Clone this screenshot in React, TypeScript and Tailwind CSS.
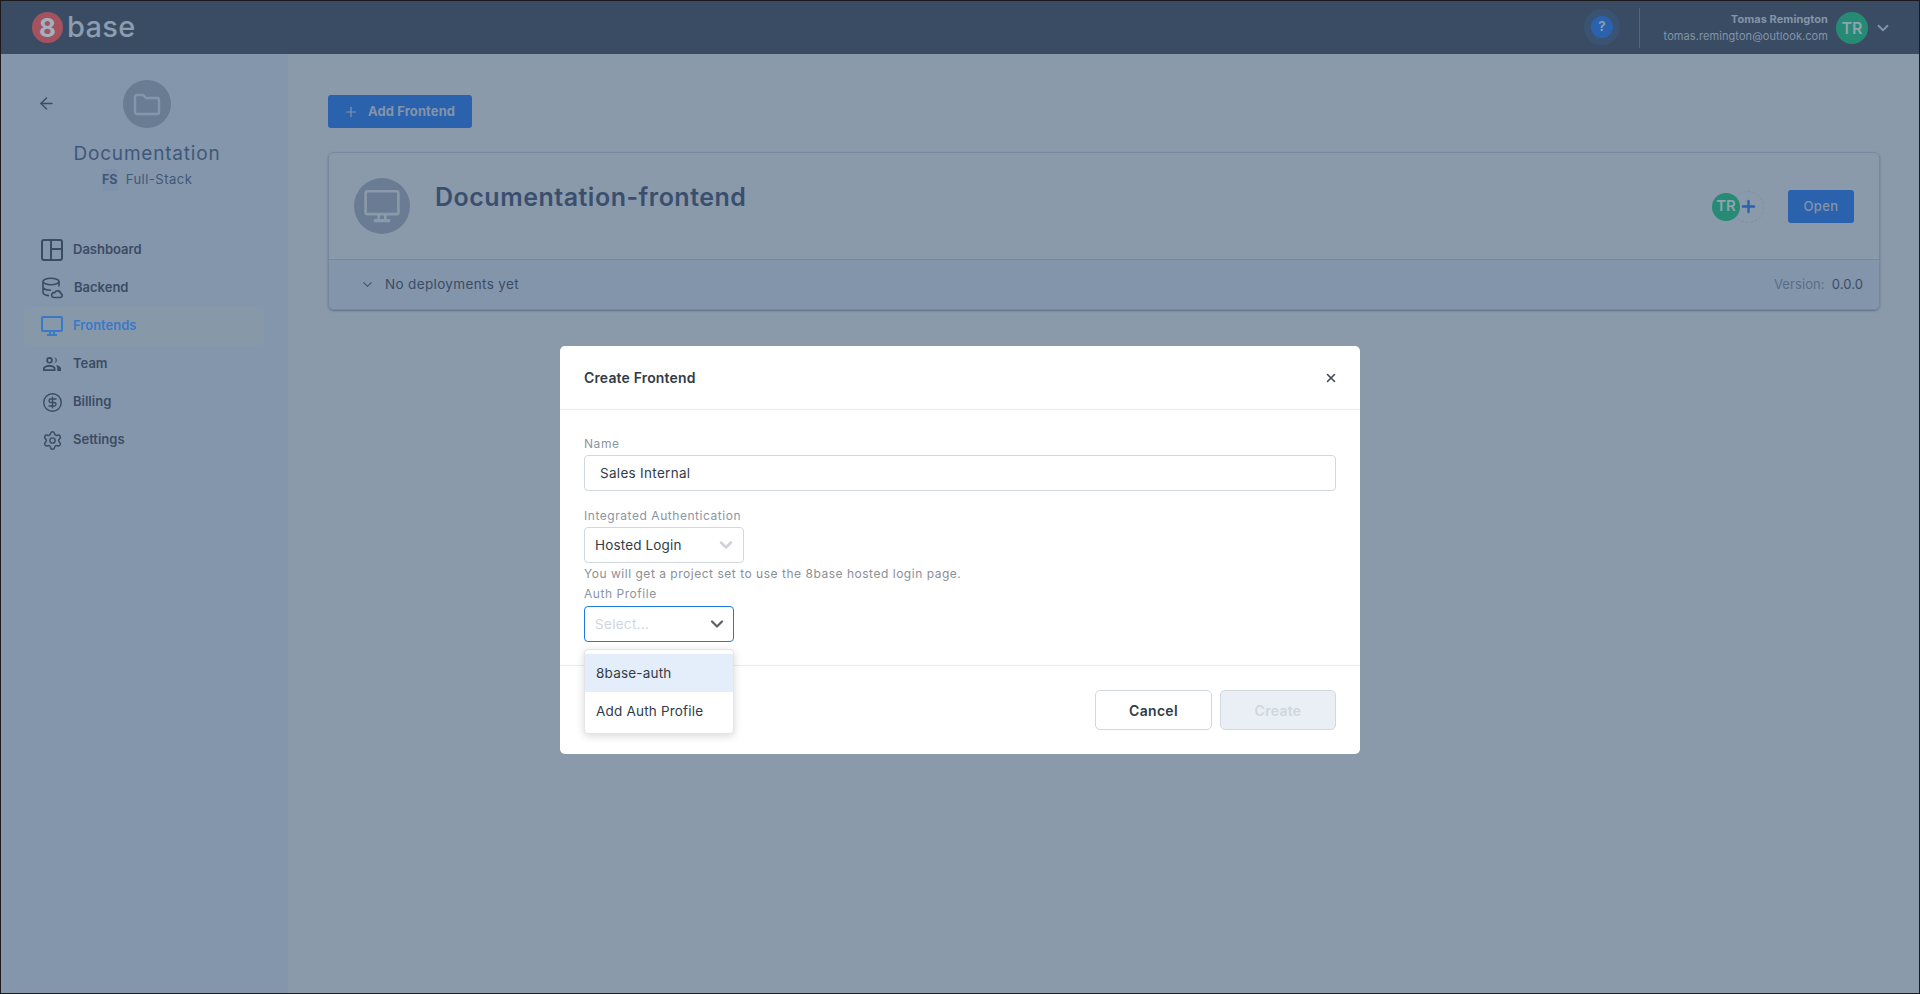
import { ChevronDown, Plus, X, ArrowLeft, CircleDollarSign, Settings } from "lucide-react";

const font = { fontFamily: "Inter, 'Noto Sans', sans-serif" };

const DashboardIcon = () => (
  <svg width="22" height="22" viewBox="0 0 22 22" fill="none" stroke="currentColor" strokeWidth="2">
    <rect x="1" y="1" width="20" height="20" rx="2" />
    <path d="M10 1v20M10 10h11" />
  </svg>
);

const BackendIcon = () => (
  <svg width="22" height="22" viewBox="0 0 22 22" fill="none" stroke="currentColor" strokeWidth="1.6">
    <ellipse cx="10" cy="4.5" rx="8" ry="3.2" />
    <path d="M2 4.5v11c0 1.6 2.6 2.8 6 3.1M18 4.5v5M2 10c0 1.8 3.4 3.2 8 3.2" />
    <path d="M12.5 20.5h7a2 2 0 0 0 .3-3.9 3.2 3.2 0 0 0-6.1-.8 2.4 2.4 0 0 0-1.2 4.7z" />
  </svg>
);

const MonitorIcon = ({ size = 22, stroke = 2 }: { size?: number; stroke?: number }) => (
  <svg width={size} height={size} viewBox="0 0 22 22" fill="none" stroke="currentColor" strokeWidth={stroke}>
    <rect x="1" y="2" width="20" height="14" rx="1" />
    <path d="M9 16v3M13 16v3" />
    <path d="M6 20h10" strokeWidth="2" />
  </svg>
);

const TeamIcon = () => (
  <svg width="20" height="20" viewBox="0 0 20 20" fill="currentColor">
    <path fillRule="evenodd" d="M7.5 3a3.3 3.3 0 1 1 0 6.6 3.3 3.3 0 0 1 0-6.6zm0 1.7a1.6 1.6 0 1 0 0 3.2 1.6 1.6 0 0 0 0-3.2z" />
    <path d="M12.5 3.2a3.2 3.2 0 0 1 0 6.2c.8-.8 1.2-1.9 1.2-3.1s-.4-2.3-1.2-3.1z" />
    <path fillRule="evenodd" d="M7.5 11c3 0 6 1.3 6 3.4V17H1v-2.6C1 12.3 4.5 11 7.5 11zm0 1.7c-2.3 0-4.8.9-4.8 1.8v.8h9v-.8c0-.9-1.9-1.8-4.2-1.8z" />
    <path d="M14 11.3c2.5.3 5 1.3 5 3.1V17h-3.8v-2.6c0-1.3-.5-2.3-1.2-3.1z" />
  </svg>
);

const FolderIcon = () => (
  <svg width="28" height="24" viewBox="0 0 28 24" fill="none" stroke="currentColor" strokeWidth="2.4">
    <path d="M2 5a2 2 0 0 1 2-2h6l3 3h11a2 2 0 0 1 2 2v12a2 2 0 0 1-2 2H4a2 2 0 0 1-2-2z" />
  </svg>
);

const navItems = [
  { label: "Dashboard", icon: <DashboardIcon /> },
  { label: "Backend", icon: <BackendIcon />, shift: true },
  { label: "Frontends", icon: <MonitorIcon />, active: true },
  { label: "Team", icon: <TeamIcon /> },
  { label: "Billing", icon: <CircleDollarSign size={21} strokeWidth={1.6} /> },
  { label: "Settings", icon: <Settings size={21} strokeWidth={1.7} /> },
];

function TopBar() {
  return (
    <header className="h-[53px] shrink-0 bg-[#3a4c64] flex items-center pl-[31px] pr-[27px]">
      <div className="w-[31px] h-[31px] rounded-full bg-[#a5525f] flex items-center justify-center text-[#a3b0c0] text-[26px] font-bold leading-none">
        8
      </div>
      <span className="ml-[4px] text-[29px] leading-none font-medium text-[#8c9db0] tracking-[0.3px] pb-[2px]">base</span>
      <div className="ml-auto flex items-center">
        <div className="w-[36px] h-[36px] -mt-[1px] rounded-full bg-[#3a5373] flex items-center justify-center">
          <div className="w-[22px] h-[22px] rounded-full bg-[#2a62ae] flex items-center justify-center text-[#8c9db0] text-[13px] font-bold">
            ?
          </div>
        </div>
        <div className="w-px h-[40px] bg-[#54657c] ml-[19px]" />
        <div className="w-[188px] text-right">
          <div className="text-[11px] font-bold text-[#8494a8] leading-[16px] tracking-[0.05px] -mt-[1px]">Tomas Remington</div>
          <div className="text-[11px] text-[#8494a8] leading-[16px] mt-[1px] tracking-[0.08px]">tomas.remington@outlook.com</div>
        </div>
        <div className="w-[32px] h-[32px] ml-[8px] rounded-full bg-[#268a74] flex items-center justify-center text-[#8fa3b0] text-[16px] font-semibold">
          TR
        </div>
        <ChevronDown size={18} strokeWidth={2.4} className="ml-[6px] text-[#8494a8]" />
      </div>
    </header>
  );
}

function Sidebar() {
  return (
    <aside className="w-[287px] shrink-0 bg-[#8496ac] flex flex-col">
      <div className="relative flex flex-col items-center pt-[26px] pl-[5px]">
        <ArrowLeft size={19} strokeWidth={1.8} className="absolute left-[36px] top-[40px] text-[#3a4c64]" />
        <div className="w-[48px] h-[48px] rounded-full bg-[#6a7c93] flex items-center justify-center text-[#8496ac]">
          <FolderIcon />
        </div>
        <div className="mt-[13px] text-[19px] leading-[26px] text-[#3f5878] tracking-[0.8px]">Documentation</div>
        <div className="mt-[2px] flex items-center text-[13px] text-[#3f5878]">
          <span className="w-[16px] h-[22px] mr-[8px] bg-[#8092a9] flex items-center justify-center font-bold text-[12.5px]">FS</span>
          <span className="tracking-[0.5px]">Full-Stack</span>
        </div>
      </div>
      <nav className="mt-[40px] mx-[23px] flex flex-col">
        {navItems.map((item) => (
          <div
            key={item.label}
            className={
              item.active
                ? "h-[38px] w-[240px] flex items-center rounded-[3px] bg-[#8798a9] text-[#3a78c9] pl-[17px]"
                : "h-[38px] w-[240px] flex items-center rounded-[3px] text-[#3a4c64] pl-[17px]"
            }
          >
            <span className="w-[22px] flex justify-center">{item.icon}</span>
            <span className={item.shift ? "ml-[11px] text-[13px] font-semibold" : "ml-[10px] text-[13px] font-semibold"}>
              {item.label}
            </span>
          </div>
        ))}
      </nav>
    </aside>
  );
}

function FrontendCard() {
  return (
    <div className="mt-[24px] w-[1552px] rounded-[6px] border border-[#75889f] shadow-[0_1px_2px_rgba(50,70,100,0.5)] overflow-hidden">
      <div className="h-[107px] flex items-start border-b border-[#75889f] pl-[25px] pr-[25px]">
        <div className="mt-[25px] w-[56px] h-[56px] rounded-full bg-[#6a7c93] flex items-center justify-center text-[#8a9aab]">
          <MonitorIcon size={36} stroke={1.6} />
        </div>
        <div className="ml-[25px] mt-[27px] text-[25px] leading-[34px] font-semibold text-[#3a4f6e] tracking-[0.5px]">
          Documentation-frontend
        </div>
        <div className="ml-auto mt-[37px] flex items-center">
          <div className="relative w-[28px] h-[28px] rounded-full bg-[#268a74] flex items-center justify-center text-[#8fa3b0] text-[15px] font-semibold">
            TR
          </div>
          <div className="-ml-[8px] w-[32px] h-[32px] rounded-full border border-dashed border-[#7f91a6] flex items-center justify-center text-[#2a62ae]">
            <Plus size={19} strokeWidth={3} />
          </div>
          <button className="ml-[24px] w-[66px] h-[33px] rounded-[3px] bg-[#2a62ae] text-[#8494a8] text-[13px] font-medium tracking-[0.4px]">
            Open
          </button>
        </div>
      </div>
      <div className="h-[49px] bg-[#8395ab] flex items-center pl-[31px] pr-[16px]">
        <ChevronDown size={15} strokeWidth={1.7} className="text-[#3f5270]" />
        <span className="ml-[10px] text-[13.5px] text-[#3a4c64] tracking-[0.35px]">No deployments yet</span>
        <span className="ml-auto text-[13px] text-[#5a6d87] tracking-[0.1px]">Version:</span>
        <span className="ml-[7px] text-[13px] text-[#3a4c64] tracking-[0.1px]">0.0.0</span>
      </div>
    </div>
  );
}

function Field({ label, className, children }: { label: string; className?: string; children: React.ReactNode }) {
  return (
    <div className={className}>
      <div className="text-[12px] leading-[18px] text-[#8b95a3] tracking-[0.55px]">{label}</div>
      {children}
    </div>
  );
}

function CreateDialog() {
  return (
    <div className="absolute inset-0 flex justify-center pt-[345px]">
      <div className="relative w-[800px] h-[408px] bg-white rounded-[5px] flex flex-col text-[#323c47]">
        <div className="h-[64px] shrink-0 flex items-center justify-between border-b border-[#e8edf2] pl-[24px] pr-[22px]">
          <span className="text-[14px] font-semibold tracking-[0.15px]">Create Frontend</span>
          <X size={14} strokeWidth={2.6} className="text-[#3f4a58]" />
        </div>
        <div className="h-[256px] shrink-0 border-b border-[#e8edf2] px-[24px] pt-[25px]">
          <Field label="Name">
            <div className="mt-[2px] h-[36px] rounded-[4px] border border-[#d0d7dd] flex items-center pl-[15px] text-[13.5px] tracking-[0.3px]">
              Sales Internal
            </div>
          </Field>
          <Field label="Integrated Authentication" className="mt-[16px]">
            <div className="mt-[2px] w-[160px] h-[36px] rounded-[4px] border border-[#d0d7dd] flex items-center pl-[10px] pr-[7px] text-[13.5px] justify-between tracking-[0.15px]">
              Hosted Login
              <ChevronDown size={20} strokeWidth={3} className="text-[#cfd3d8]" />
            </div>
          </Field>
          <div className="mt-[2px] text-[12px] leading-[18px] text-[#8b8f96] tracking-[0.52px]">
            You will get a project set to use the 8base hosted login page.
          </div>
          <Field label="Auth Profile" className="mt-[2px]">
            <div className="relative mt-[3px] w-[150px]">
              <div className="h-[36px] rounded-[4px] border border-[#1e7ae0] flex items-center justify-between pl-[10px] pr-[6px] text-[13.5px] text-[#cfd6de] tracking-[0.3px]">
                Select...
                <ChevronDown size={20} strokeWidth={2.6} className="text-[#5c5f63]" />
              </div>
              <div className="absolute top-[43px] left-0 w-[150px] h-[85px] pt-[4px] rounded-[4px] bg-white border border-[#e2e4e7] shadow-[0_2px_8px_rgba(0,0,0,0.16)] text-[13.5px] tracking-[0.2px]">
                <div className="h-[38px] bg-[#e3eefa] flex items-center pl-[11px]">8base-auth</div>
                <div className="h-[38px] flex items-center pl-[11px]">Add Auth Profile</div>
              </div>
            </div>
          </Field>
        </div>
        <div className="flex-1 flex items-start justify-end gap-[8px] pr-[24px] pt-[24px]">
          <button className="w-[117px] h-[40px] rounded-[5px] border border-[#d0d7dd] text-[14px] font-semibold tracking-[0.3px]">
            Cancel
          </button>
          <button className="w-[116px] h-[40px] rounded-[5px] border border-[#d0d7dd] bg-[#e9eff5] text-[#d0d7dd] text-[14px] font-semibold tracking-[0.3px]">
            Create
          </button>
        </div>
      </div>
    </div>
  );
}

export default function App() {
  return (
    <div style={font} className="relative h-[994px] w-full border border-[#1c1c1c] flex flex-col bg-[#8a9aab] overflow-hidden">
      <TopBar />
      <div className="flex-1 flex min-h-0">
        <Sidebar />
        <main className="flex-1 pl-[40px] pt-[41px]">
          <button className="w-[144px] h-[33px] rounded-[3px] bg-[#2a62ae] flex items-center pl-[15px] text-[#8494a8] text-[13px] font-bold tracking-[0.1px]">
            <Plus size={16} strokeWidth={1.8} />
            <span className="ml-[9px]">Add Frontend</span>
          </button>
          <FrontendCard />
        </main>
      </div>
      <CreateDialog />
    </div>
  );
}
